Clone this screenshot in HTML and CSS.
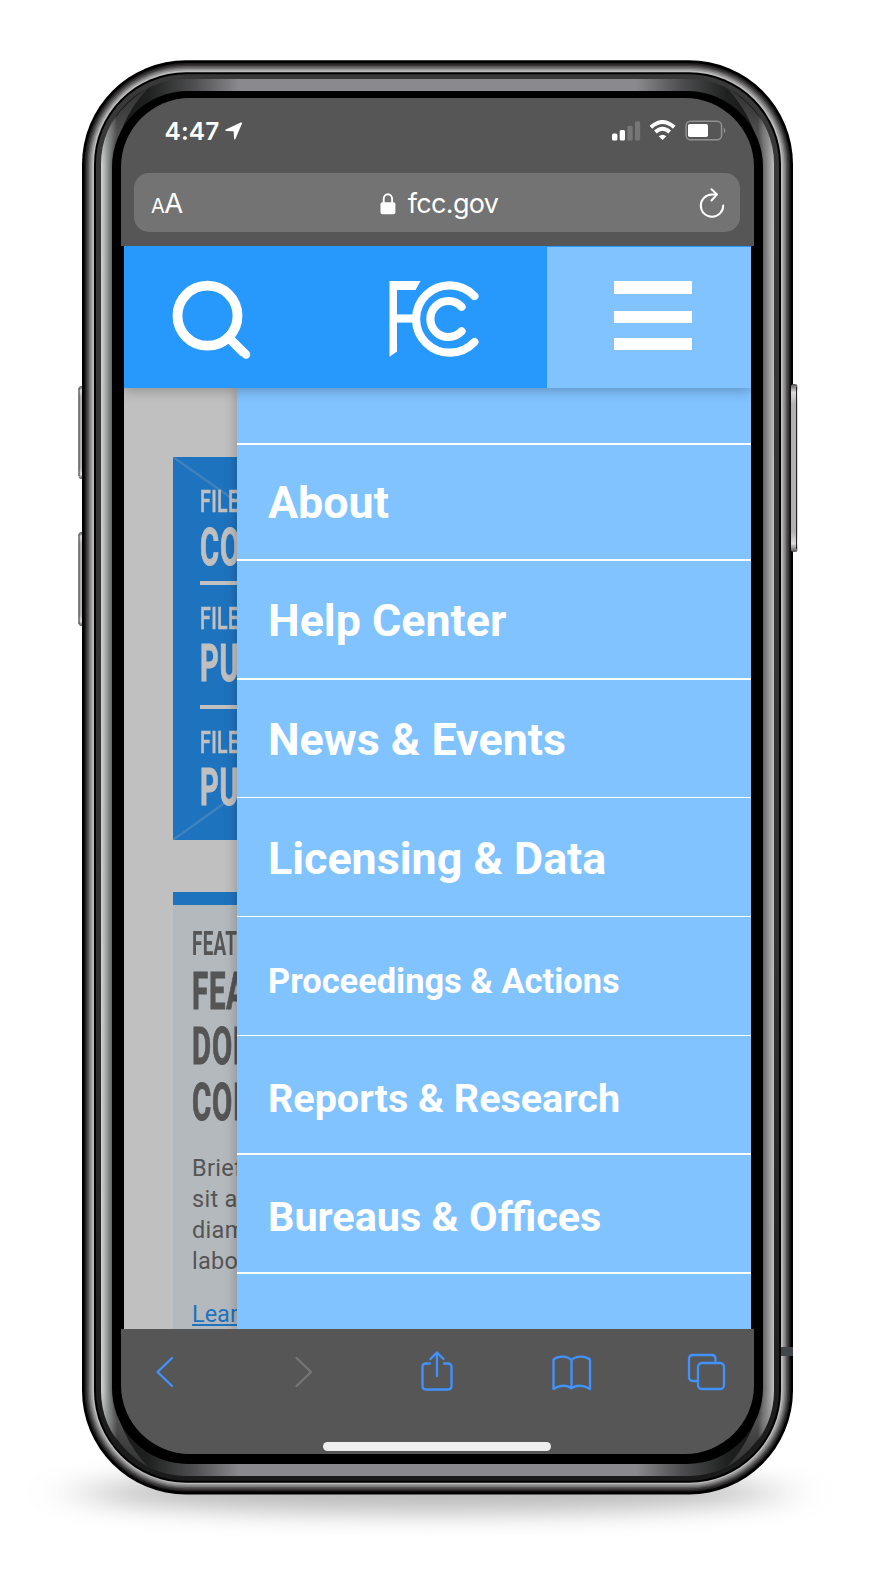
FILE: index.html
```html
<!DOCTYPE html>
<html lang="en">
<head>
<meta charset="utf-8">
<title>fcc.gov</title>
<link rel="stylesheet" href="styles.css">
</head>
<body>
<div class="stage">
  <svg class="frame" viewBox="0 0 876 1584" width="876" height="1584" aria-hidden="true">
    <defs>
      <linearGradient id="bezel" gradientUnits="userSpaceOnUse" x1="101" y1="0" x2="774" y2="0">
        <stop offset="0" stop-color="#d0d4d2"/><stop offset=".005" stop-color="#b4b8b6"/>
        <stop offset=".0155" stop-color="#666a68"/><stop offset=".024" stop-color="#171717"/>
        <stop offset=".07" stop-color="#1f2120"/><stop offset=".14" stop-color="#505052"/><stop offset=".205" stop-color="#8a8a8e"/>
        <stop offset=".795" stop-color="#8a8a8e"/><stop offset=".86" stop-color="#505052"/><stop offset=".93" stop-color="#1f2120"/>
        <stop offset=".976" stop-color="#171717"/><stop offset=".984" stop-color="#666"/><stop offset="1" stop-color="#c0c0c0"/>
      </linearGradient>
      <linearGradient id="rim" x1="0" y1="0" x2="0" y2="1"><stop offset="0" stop-color="#383838"/><stop offset=".6" stop-color="#333"/><stop offset="1" stop-color="#1a1a1a"/></linearGradient>
      <linearGradient id="glint" gradientUnits="userSpaceOnUse" x1="0" y1="165" x2="0" y2="88"><stop offset="0" stop-color="#999" stop-opacity="0"/><stop offset=".4" stop-color="#888" stop-opacity=".5"/><stop offset="1" stop-color="#666" stop-opacity=".3"/></linearGradient>
      <linearGradient id="key" x1="0" y1="0" x2="0" y2="1"><stop offset="0" stop-color="#555"/><stop offset=".05" stop-color="#dcdada"/><stop offset=".12" stop-color="#b5b1b2"/><stop offset=".88" stop-color="#b5b1b2"/><stop offset=".95" stop-color="#dcdada"/><stop offset="1" stop-color="#555"/></linearGradient>
      <filter id="soft" x="-20%" y="-200%" width="140%" height="500%"><feGaussianBlur stdDeviation="30 12"/></filter>
    </defs>
    <ellipse class="ground" cx="430" cy="1493" rx="350" ry="20" filter="url(#soft)"/>
    <g class="keys" fill="url(#key)">
      <rect x="78.500" y="386" width="10" height="93" rx="3"/>
      <rect x="78.500" y="532" width="10" height="94" rx="3"/>
    </g>
    <rect x="82" y="60.300" width="711" height="1434.200" rx="104" fill="#000"/>
    <rect x="84.500" y="63" width="706" height="1428.500" rx="101.500" fill="#211f20"/>
    <rect x="86" y="64.500" width="703" height="1425.500" rx="100" fill="#393738"/>
    <rect x="87.500" y="66" width="700" height="1422.500" rx="98.500" fill="#595758"/>
    <rect x="89" y="67.500" width="697" height="1419.500" rx="97" fill="#787878"/>
    <rect x="90.500" y="69" width="694" height="1416.500" rx="95.500" fill="#999"/>
    <rect x="92.200" y="70.500" width="690.600" height="1413.500" rx="94" fill="#bbb"/>
    <rect x="94" y="72.300" width="687" height="1410.400" rx="92" fill="#000"/>
    <rect x="96" y="74.300" width="683" height="1406.400" rx="90" fill="url(#rim)"/>
    <rect x="101" y="79" width="673" height="1397" rx="85" fill="url(#bezel)"/>
    <path id="gl" d="M101 165Q102 116 148 88Q118 120 113 165Z" fill="url(#glint)"/>
    <use href="#gl" transform="translate(875 0) scale(-1 1)"/>
    <use href="#gl" transform="translate(0 1555) scale(1 -1)"/>
    <use href="#gl" transform="translate(875 1555) scale(-1 -1)"/>
    <rect x="112" y="91" width="651" height="1373" rx="76" fill="#000"/>
    <path d="M781 1347h12v9h-12z" fill="#42464a"/>
    <path d="M79 388v88M79 534v90" stroke="#333" stroke-width="1"/>
    <rect x="791" y="384" width="6.500" height="168" rx="2.500" fill="url(#key)"/>
    <path d="M796.500 387v162" stroke="#222" stroke-width="1"/>
  </svg>

  <main class="screen">
    <header class="browser">
      <div class="status">
        <span class="time">4:47</span>
        <svg class="locate" viewBox="0 0 18 18" width="18" height="18"><path d="M.8 7.600L15.800.5q1.500-.5 1.200 1L10.400 16.900q-.9 1.200-1.300-.2L8.700 9.700Q8.600 9.300 8 9.200L1 9.100Q-.4 8.500.8 7.600Z" fill="#fff"/></svg>
        <svg class="signals" viewBox="0 0 116 22" width="116" height="22">
          <g fill="#fff"><rect x="0" y="13.500" width="5.400" height="7" rx="1.500"/><rect x="7.700" y="10" width="5.300" height="10.500" rx="1.500"/></g>
          <g fill="#767676"><rect x="15.400" y="5.700" width="5.300" height="14.800" rx="1.500"/><rect x="23" y="1.200" width="5.200" height="19.300" rx="1.500"/></g>
          <g fill="none" stroke="#fff" stroke-width="3.900"><path d="M38.900 7.200Q50.500-3.200 62.200 7.200"/><path d="M43.400 12Q50.500 5.600 57.700 12"/></g>
          <path d="M46.700 16.200Q50.500 13.200 54.400 16.200L50.500 20Z" fill="#fff"/>
          <rect x="74.100" y="1.200" width="35.500" height="18.600" rx="4.500" fill="none" stroke="#929292" stroke-width="1.500"/>
          <rect x="76" y="4" width="20" height="13" rx="1.800" fill="#fff"/><path d="M111.800 7.500q3 3 0 6z" fill="#929292"/>
        </svg>
      </div>
      <div class="address">
        <span class="sizer"><span class="small-a">A</span><span>A</span></span>
        <span class="site">
          <svg viewBox="0 0 16 22" width="16" height="22"><path d="M3.700 10V6a4.200 4.700 0 0 1 8.400 0v4" fill="none" stroke="#fff" stroke-width="1.900"/><rect x=".5" y="9.300" width="14.900" height="12" rx="2" fill="#fff"/></svg>
          <span class="url">fcc.gov</span>
        </span>
        <svg class="reload" viewBox="0 0 26 30" width="26" height="30" fill="none" stroke="#fff" stroke-width="2" stroke-linecap="round" stroke-linejoin="round"><path d="M17.600 6.400H13A11.200 11.200 0 1 0 24.200 17.400"/><path d="M12.500 1.300L18 6.400L12.500 12.500"/></svg>
      </div>
    </header>

    <section class="viewport">
      <nav class="topbar">
        <div class="search"><svg viewBox="0 0 80 80" width="80" height="80" fill="none" stroke="#fff"><circle cx="35.500" cy="35.700" r="30" stroke-width="9.800"/><path d="M56.500 57.500L72 73" stroke-width="9"/><path d="M72 72.500L74 74.500" stroke-width="8.500" stroke-linecap="round"/></svg></div>
        <div class="logo">
          <svg viewBox="0 0 92 80" width="92" height="80" fill="none" stroke="#fff" stroke-linecap="round">
            <path d="M.5 1H31.500L26.500 10H8V71.500L.5 76.700Z" fill="#fff" stroke="none"/>
            <path d="M8 38.500H25" stroke-width="8.200" stroke-linecap="butt"/>
            <path d="M85.400 16A33.700 33.700 0 1 0 85.400 62" stroke-width="8.200"/>
            <path d="M72.500 26.700A18 18 0 1 0 72.500 51.300" stroke-width="8.200"/>
          </svg>
        </div>
        <div class="burger"><i></i><i></i><i></i></div>
      </nav>
      <div class="body">
        <article class="page">
          <div class="filings">
            <svg class="cross" viewBox="0 0 64 383" width="64" height="383"><path d="M0 0L64 45M0 383L64 337" stroke="#c0c0c0" stroke-opacity=".2" stroke-width="2.500"/></svg>
            <div class="list">
              <p class="kicker first">FILE</p><p class="title co">CO</p><hr>
              <p class="kicker">FILE</p><p class="title">PU</p><hr>
              <p class="kicker">FILE</p><p class="title">PU</p>
            </div>
          </div>
          <div class="feature">
            <p class="label">FEAT</p>
            <p class="headline">FEA<br>DON<br>CON</p>
            <p class="brief">Brief<br>sit a<br>diam<br>labo</p>
            <a class="more">Lear</a>
          </div>
        </article>
        <ul class="drawer">
          <li class="lg about">About</li>
          <li class="lg help">Help Center</li>
          <li class="lg news">News &amp; Events</li>
          <li class="lg licensing">Licensing &amp; Data</li>
          <li class="proceedings">Proceedings &amp; Actions</li>
          <li class="reports">Reports &amp; Research</li>
          <li class="bureaus">Bureaus &amp; Offices</li>
        </ul>
      </div>
    </section>

    <footer class="tools">
      <svg viewBox="0 0 633 100" width="633" height="100" fill="none" stroke="#4192ff" stroke-width="2.300" stroke-linecap="round" stroke-linejoin="round">
        <path d="M51 29L36.500 43L51 57"/>
        <path d="M175.500 29L190 43L175.500 57" stroke="#767676"/>
        <path d="M309 34.500H305q-3.500 0-3.500 3.500v19q0 3.500 3.500 3.500h22q3.500 0 3.500-3.500V38q0-3.500-3.500-3.500h-4M316 47V23.500M309.500 30L316 23.500L322.500 30"/>
        <path d="M450.500 31C446 26.500 437 26.500 432.500 30.500V60C438 56 446 55.500 450.500 59.500C455 55.500 463 56 469 60V30.500C464 26.500 455 26.500 450.500 31V59.500"/>
        <path d="M576.500 52H572q-4 0-4-4V30q0-4 4-4h18.500q4 0 4 4v4"/><rect x="577" y="34" width="26" height="26" rx="4"/>
      </svg>
      <div class="home"></div>
    </footer>
  </main>
</div>
</body>
</html>
```

FILE: styles.css
```css
* { box-sizing: border-box; }
body { margin: 0; background: #fff; }
p, ul { margin: 0; padding: 0; }
svg { display: block; }

.stage { display: grid; width: 876px; height: 1584px; overflow: hidden; }
.frame, .screen { grid-area: 1 / 1; }
.ground { fill: #000; fill-opacity: .27; }

.screen {
  z-index: 1;
  width: 633px;
  height: 1355.500px;
  margin: 98px 0 0 121px;
  border-radius: 69px;
  overflow: hidden;
  display: flex;
  flex-direction: column;
}

/* Browser chrome */
.browser { height: 148px; background: #565656; color: #fff; font-family: Inter, "Liberation Sans", sans-serif; }
.status { height: 75px; padding: 22px 27px 0 43.500px; display: flex; align-items: flex-start; }
.time { width: 60px; font-size: 24.500px; font-weight: 600; line-height: 22px; letter-spacing: .1px; }
.locate { margin-top: 2px; }
.signals { margin-left: auto; }
.status .signals { margin-right: -1px; }
.address {
  height: 59px;
  margin: 0 14px 0 13px;
  padding: 0 15px 0 17px;
  border-radius: 15px;
  background: #737373;
  display: grid;
  grid-template-columns: 100px 1fr 100px;
  align-items: center;
}
.sizer { font-size: 27.500px; display: flex; align-items: baseline; letter-spacing: -.5px; padding-top: 1px; }
.small-a { font-size: 20px; }
.site { display: flex; align-items: center; justify-content: center; gap: 12px; padding: 2px 0 0 2px; }
.url { font-size: 27px; line-height: 30px; letter-spacing: -.65px; }
.reload { justify-self: end; }

/* Site header */
.viewport { width: 627.300px; height: 1083px; margin-left: 3px; overflow: hidden; }
.topbar {
  position: relative;
  z-index: 2;
  height: 142px;
  display: grid;
  grid-template-columns: 210px 213px 1fr;
  background: #2799fc;
  box-shadow: 0 2px 12px rgba(0, 0, 0, .28);
}
.search { padding: 34px 0 0 48px; }
.logo { padding: 34px 0 0 55px; }
.burger { margin-top: 1px; padding: 34px 0 0 67px; background: #80c3ff; display: flex; flex-direction: column; }
.burger i { width: 78px; height: 12px; background: #fff; margin-bottom: 15px; }
.burger i:first-child { height: 13px; margin-bottom: 17px; }

/* Dimmed page with the drawer stacked on top */
.body { height: 941px; display: grid; background: #c0c0c0; }
.page, .drawer { grid-area: 1 / 1; }
.page { padding: 69px 0 0 49px; width: 113px; overflow: hidden; }
.filings { height: 383px; display: grid; background: #1e73be; color: #c0c0c0; }
.cross, .list { grid-area: 1 / 1; }
.list { padding-left: 27px; font-family: Roboto, sans-serif; }
.kicker, .title, .label, .headline { width: 100px; transform-origin: 0 0; white-space: nowrap; }
.kicker { height: 35px; font-size: 31.500px; font-weight: 500; line-height: 32px; transform: scaleX(.62); letter-spacing: .6px; -webkit-text-stroke: .5px currentColor; }
.first { padding-top: 28.500px; height: 64.500px; }
.title { font-size: 51px; font-weight: 700; line-height: 52px; height: 67px; transform: scaleX(.57); letter-spacing: 1.500px; -webkit-text-stroke: 1px currentColor; }
.co { height: 59.500px; }
.list hr { height: 4px; margin: 0 0 18px; border: 0; background: #c0c0c0; }

.feature { margin-top: 52px; height: 437px; padding: 23px 0 0 19px; border-top: 13px solid #1e73be; background: #b4b9bd; color: #555; font-family: Roboto, sans-serif; }
.label { font-size: 32.500px; font-weight: 700; line-height: 32px; transform: scaleX(.58); letter-spacing: .5px; }
.headline { margin-top: 4px; font-size: 51.500px; font-weight: 700; line-height: 55.300px; transform: scaleX(.57); letter-spacing: 1.500px; -webkit-text-stroke: 1px currentColor; }
.brief { margin-top: 23px; width: 90px; font-size: 23.500px; line-height: 31px; letter-spacing: .3px; }
.more { display: block; margin-top: 22px; font-size: 23.500px; line-height: 31px; color: #1e73be; text-decoration: underline; text-decoration-thickness: 2px; text-underline-offset: 2px; }

.drawer {
  z-index: 1;
  margin-left: 113px;
  background: #80c3ff;
  list-style: none;
  color: #fff;
  font-family: Roboto, sans-serif;
  font-weight: 700;
  padding-top: 55px;
  box-shadow: 0 0 12px rgba(0, 0, 0, .28);
}
.drawer li { display: flex; align-items: center; padding-left: 31px; border-bottom: 2px solid #fff; white-space: nowrap; }
.lg { font-size: 44.800px; }
.drawer .about { height: 118px; border-top: 2px solid #fff; padding-top: 1px; }
.drawer .help { height: 119px; padding-top: 2px; }
.drawer .news { height: 118px; padding-top: 2px; border-bottom-width: 1px; }
.drawer .licensing { height: 119px; padding-top: 3px; border-bottom-width: 1px; }
.drawer .proceedings { height: 119px; padding-top: 10px; font-size: 34.400px; border-bottom-width: 1px; }
.drawer .reports { height: 119px; padding-top: 8px; font-size: 39.500px; }
.drawer .bureaus { height: 119px; padding-top: 7px; font-size: 41.400px; }

/* Browser toolbar */
.tools { flex: 1; background: #565656; display: flex; flex-direction: column; align-items: center; }
.home { width: 228px; height: 9px; margin: 13px 1px 0 0; border-radius: 5px; background: #eee; }
```
